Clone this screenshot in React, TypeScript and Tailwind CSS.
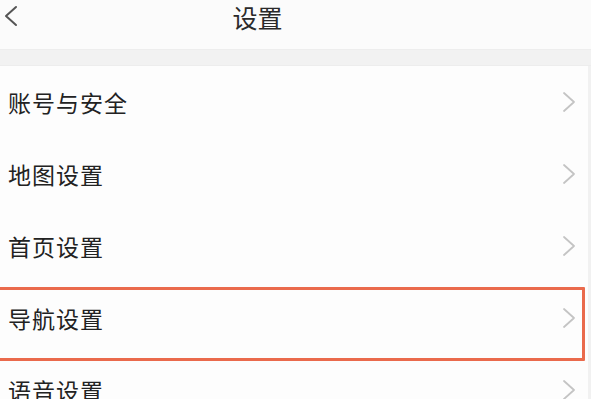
import React from "react";

const rows = ["账号与安全", "地图设置", "首页设置", "导航设置", "语音设置"];

function Chevron({ className }: { className?: string }) {
  return (
    <svg width="16" height="22" viewBox="0 0 16 22" className={className} fill="none">
      <path d="M3 2 L13 11 L3 20" stroke="currentColor" strokeWidth="1.8" strokeLinecap="round" strokeLinejoin="round" />
    </svg>
  );
}

export default function App() {
  return (
    <div
      className="relative w-[591px] h-[399px] overflow-hidden bg-[#fdfdfd] text-[#222]"
      style={{ fontFamily: '"Noto Sans CJK SC", "Noto Sans", sans-serif' }}
    >
      <header className="relative h-[49px] bg-[#fbfbfb] flex items-start justify-center">
        <div className="absolute left-[2px] top-[5px] text-[#555]">
          <svg width="18" height="22" viewBox="0 0 18 22" fill="none">
            <path d="M14 2 L4 11 L14 20" stroke="currentColor" strokeWidth="2" strokeLinecap="round" strokeLinejoin="round" />
          </svg>
        </div>
        <h1 className="mr-[76px] mt-[-1px] text-[25px] leading-[36px] text-[#2a2a2a] font-normal">设置</h1>
      </header>
      <div className="h-[17px] bg-[#f2f2f2] border-y border-[#ededed]" />
      <ul className="relative border-r-[3px] border-[#f1f1f1]">
        {rows.map((r) => (
          <li key={r} className="h-[72px] flex items-center justify-between pl-[8px] pr-[11px]">
            <span className="text-[23px] leading-none tracking-[1px] text-[#222]">{r}</span>
            <Chevron className="text-[#c4c4c4]" />
          </li>
        ))}
      </ul>
      <div className="absolute left-[-4px] top-[287px] w-[589px] h-[74px] border-[3px] border-[#ea6a4c] rounded-[1px]" />
    </div>
  );
}
